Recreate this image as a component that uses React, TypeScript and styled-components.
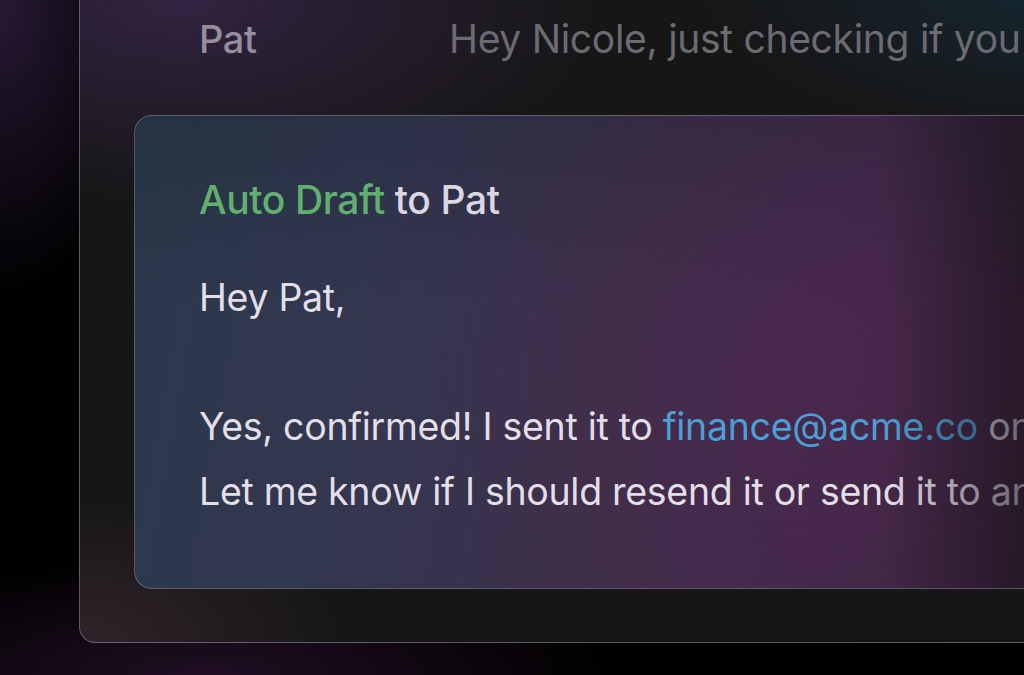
import React from "react";
import styled, { createGlobalStyle } from "styled-components";

interface ToneProps {
  $tone: "accent" | "plain";
}

const GlobalStyle = createGlobalStyle`
  html, body {
    margin: 0;
    padding: 0;
    background: #000;
  }
  * {
    box-sizing: border-box;
  }
`;

const App: React.FC = () => {
  return (
    <>
      <GlobalStyle />
      <Page>
        <Panel>
          <ThreadRow>
            <Sender>Pat</Sender>
            <Preview>Hey Nicole, just checking if you</Preview>
          </ThreadRow>
          <DraftCard>
            <DraftTitle>
              <TitlePart $tone="accent">Auto Draft</TitlePart>{" "}
              <TitlePart $tone="plain">to Pat</TitlePart>
            </DraftTitle>
            <DraftBody>
              <Line>Hey Pat,</Line>
              <Line>&nbsp;</Line>
              <Line>
                Yes, confirmed! I sent it to <Mail>finance@acme.co</Mail> on
              </Line>
              <Line>Let me know if I should resend it or send it to an</Line>
            </DraftBody>
          </DraftCard>
        </Panel>
      </Page>
    </>
  );
};

export default App;

const Page = styled.div`
  width: 1024px;
  height: 675px;
  overflow: hidden;
  padding-left: 79px;
  font-family: Inter, "Liberation Sans", sans-serif;
  background:
    radial-gradient(ellipse 160px 300px at 0% 0%, rgba(44, 28, 58, 0.9), transparent 100%),
    radial-gradient(ellipse 420px 120px at 20% 100%, rgba(40, 18, 44, 0.8), transparent 100%),
    #000;
`;

const Panel = styled.div`
  width: 1000px;
  height: 663px;
  margin-top: -20px;
  padding-top: 26px;
  border: 1px solid rgba(150, 145, 160, 0.55);
  border-radius: 16px;
  background:
    radial-gradient(ellipse 420px 200px at 10% 3%, rgba(58, 40, 78, 0.75), transparent 100%),
    radial-gradient(ellipse 380px 160px at 100% 0%, rgba(18, 48, 62, 0.7), transparent 100%),
    radial-gradient(ellipse 260px 140px at 0% 100%, rgba(64, 44, 54, 0.6), transparent 100%),
    #171617;
`;

const ThreadRow = styled.div`
  display: grid;
  grid-template-columns: 250px 1fr;
  padding-left: 119px;
  height: 64px;
  line-height: 64px;
  white-space: nowrap;
`;

const Sender = styled.div`
  font-size: 38px;
  font-weight: 500;
  color: #958e9c;
  letter-spacing: -0.4px;
`;

const Preview = styled.div`
  font-size: 39px;
  font-weight: 400;
  color: #6c6b72;
  letter-spacing: -0.3px;
`;

const DraftCard = styled.div`
  position: relative;
  margin: 44px 0 0 54px;
  height: 474px;
  padding: 52px 0 0 64px;
  border: 1px solid rgba(160, 160, 175, 0.4);
  border-radius: 18px;
  overflow: hidden;
  white-space: nowrap;
  background:
    radial-gradient(ellipse 380px 320px at 72% 55%, rgba(82, 38, 80, 0.45), transparent 100%),
    linear-gradient(180deg, rgba(20, 30, 40, 0.25) 0%, transparent 40%),
    linear-gradient(100deg, #2a3a4b 0%, #343650 28%, #3d3049 50%, #42294a 72%, #3a2438 100%);

  &::after {
    content: "";
    position: absolute;
    top: 0;
    bottom: 0;
    left: 750px;
    width: 230px;
    pointer-events: none;
    background: linear-gradient(90deg, rgba(22, 16, 24, 0) 0%, rgba(22, 16, 24, 0.5) 50%, rgba(22, 16, 24, 0.8) 100%);
  }
`;

const DraftTitle = styled.div`
  font-size: 39px;
  font-weight: 500;
  line-height: 64px;
  letter-spacing: -0.4px;
`;

const TitlePart = styled.span<ToneProps>`
  color: ${(props) => (props.$tone === "accent" ? "#62b06f" : "#dcd8e2")};
`;

const DraftBody = styled.div`
  margin-top: 34px;
  display: flex;
  flex-direction: column;
`;

const Line = styled.div`
  font-size: 37.5px;
  line-height: 64.5px;
  color: #e3dfe8;
  letter-spacing: -0.3px;
`;

const Mail = styled.span`
  color: #4c9fd4;
`;
